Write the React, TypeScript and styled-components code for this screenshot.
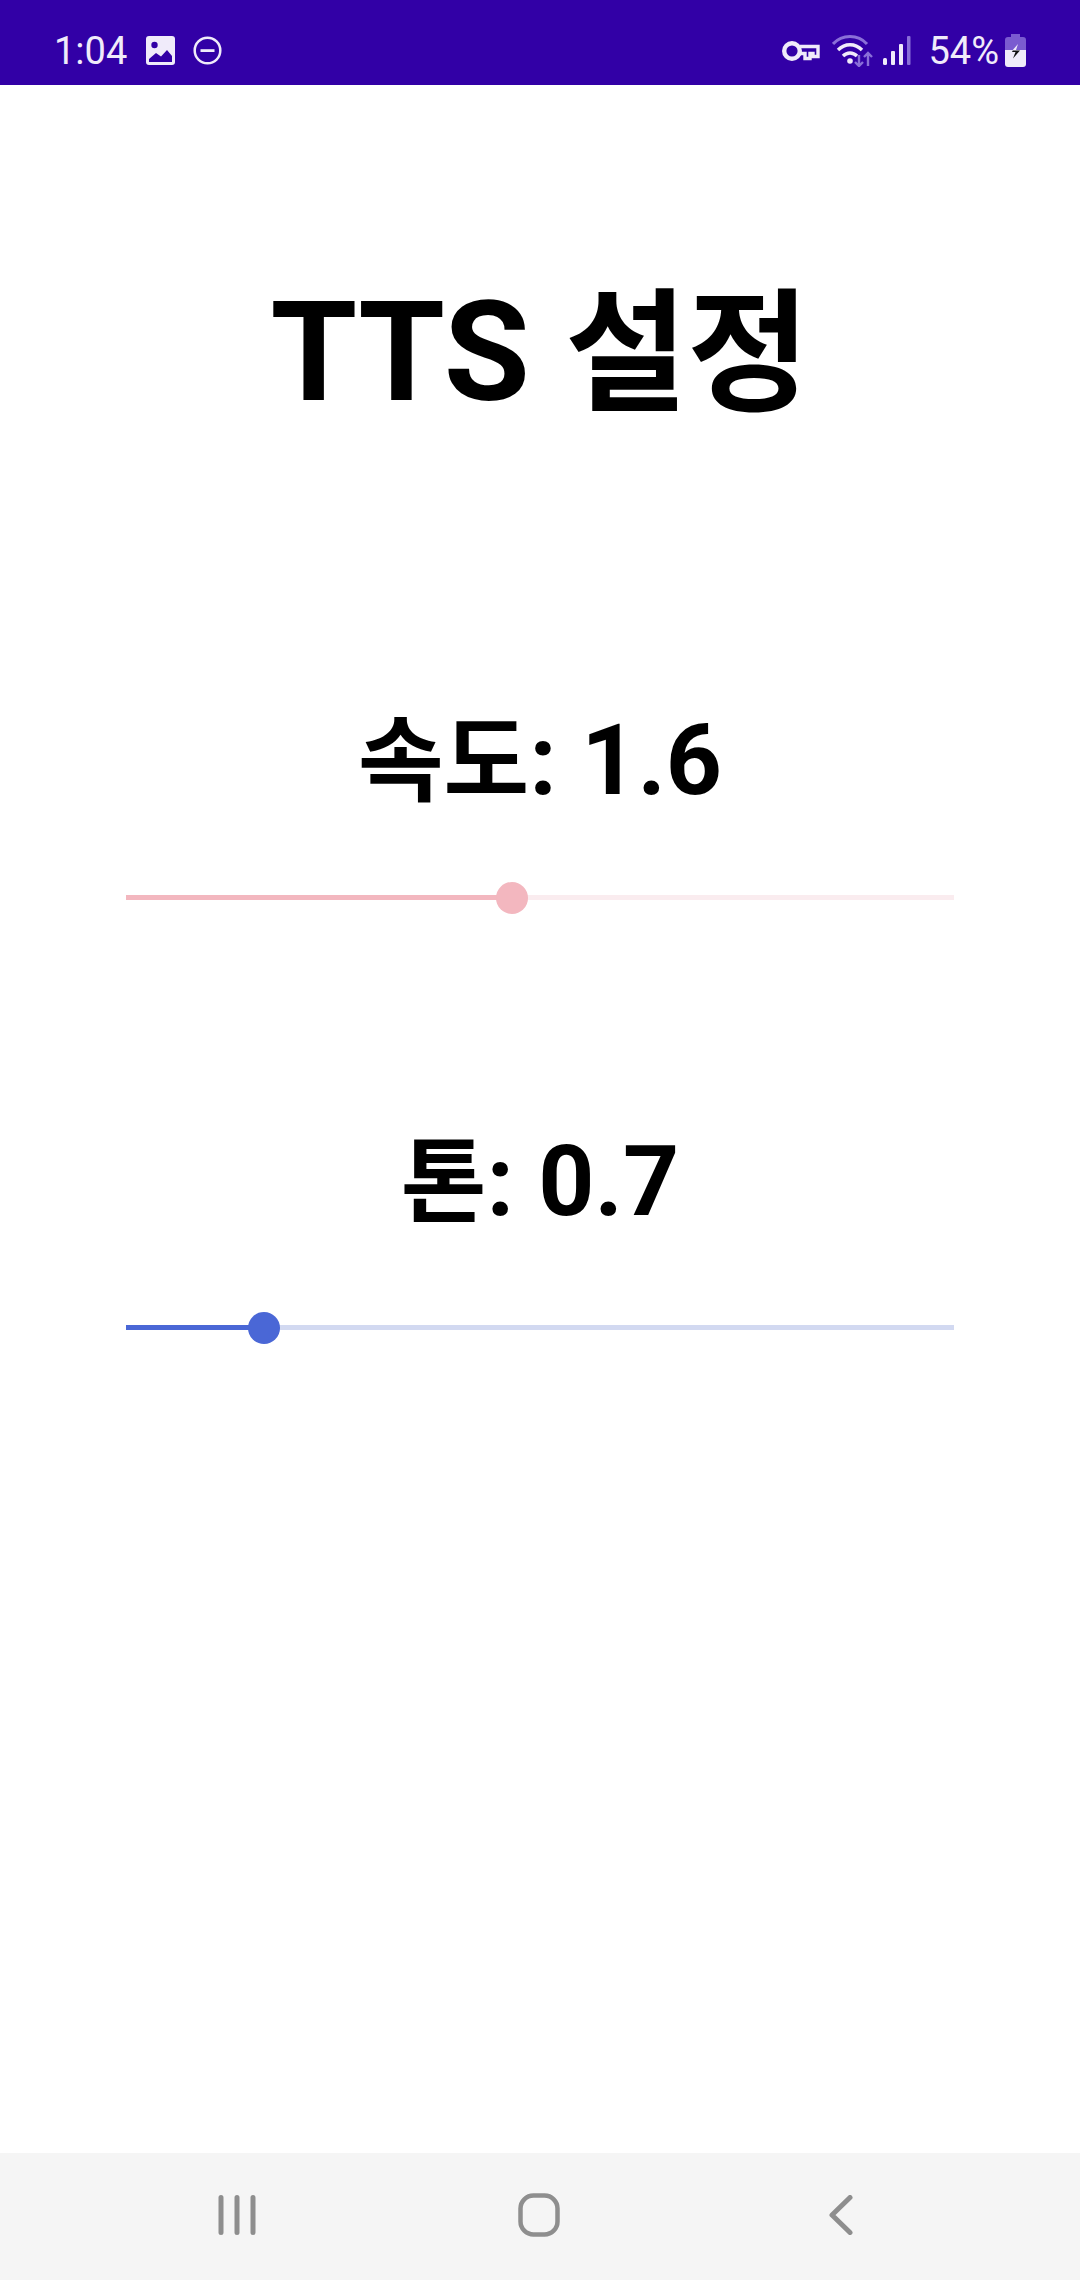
import React from 'react';
import styled, { createGlobalStyle } from 'styled-components';

const GlobalStyle = createGlobalStyle`
  html, body {
    margin: 0;
    padding: 0;
    background: #fff;
  }
`;

const Screen = styled.div`
  width: 1080px;
  height: 2280px;
  display: flex;
  flex-direction: column;
  font-family: Roboto, "Noto Sans CJK KR", sans-serif;
  overflow: hidden;
`;

const StatusBar = styled.div`
  height: 85px;
  flex: none;
  box-sizing: border-box;
  background: #3200a6;
  color: #f0ebfa;
  display: flex;
  align-items: center;
  justify-content: space-between;
  padding: 16px 54px 0 54px;
  font-size: 38px;
`;

const StatusGroup = styled.div`
  display: flex;
  align-items: center;
`;

const Clock = styled.span`
  margin-right: 19px;
`;

const Percent = styled.span`
  margin: 0 6px 0 17px;
`;

const Content = styled.main`
  flex: 1;
  display: flex;
  flex-direction: column;
  align-items: center;
  padding: 183px 126px 0;
`;

const Title = styled.h1`
  margin: 0 0 269px;
  font-size: 140px;
  line-height: 168px;
  font-weight: 700;
  color: #000;
`;

const Label = styled.h2<{ $gap: number }>`
  margin: 0 0 ${(p) => p.$gap}px;
  font-size: 98px;
  line-height: 112px;
  font-weight: 700;
  color: #000;
`;

// the device's Korean glyphs run a little smaller than the Latin ones
const Hangul = styled.span`
  font-size: 0.95em;
  line-height: 0;
`;

const SliderTrack = styled.div<{ $rest: string }>`
  position: relative;
  width: 100%;
  height: 5px;
  margin-bottom: 226px;
  background: ${(p) => p.$rest};
`;

const SliderFill = styled.div<{ $color: string }>`
  height: 100%;
  background: ${(p) => p.$color};
`;

const SliderThumb = styled.div<{ $color: string }>`
  position: absolute;
  top: 50%;
  width: 32px;
  height: 32px;
  border-radius: 50%;
  transform: translate(-50%, -50%);
  background: ${(p) => p.$color};
`;

const NavBar = styled.nav`
  height: 127px;
  flex: none;
  box-sizing: border-box;
  background: #f5f5f5;
  display: grid;
  grid-template-columns: repeat(3, 302px);
  justify-items: center;
  align-items: center;
  padding: 0 0 4px 86px;
`;

function Slider({ value, color, rest }: { value: number; color: string; rest: string }) {
  return (
    <SliderTrack $rest={rest}>
      <SliderFill $color={color} style={{ width: value }} />
      <SliderThumb $color={color} style={{ left: value }} />
    </SliderTrack>
  );
}

const ImageIcon = () => (
  <svg width="29" height="29" viewBox="0 0 29 29">
    <rect width="29" height="29" rx="3" fill="#f0ebfa" />
    <circle cx="8.5" cy="9" r="3.2" fill="#3200a6" />
    <path d="M3 26v-3l7-6 5 3.5L21 14l5 6v6z" fill="#3200a6" />
  </svg>
);

const DndIcon = () => (
  <svg width="29" height="29" viewBox="0 0 29 29" style={{ marginLeft: 18 }}>
    <circle cx="14.5" cy="14.5" r="12.8" fill="none" stroke="#f0ebfa" strokeWidth="2.5" />
    <rect x="7.5" y="13.2" width="14" height="2.8" fill="#f0ebfa" />
  </svg>
);

const KeyIcon = () => (
  <svg width="38" height="22" viewBox="0 0 38 22">
    <circle cx="10" cy="11" r="7.8" fill="none" stroke="#f0ebfa" strokeWidth="4.4" />
    <path d="M18 6.5h18v10h-5v-3h-3v5h-5v-5h-5" fill="none" stroke="#f0ebfa" strokeWidth="3.4" />
  </svg>
);

const WifiIcon = () => (
  <svg width="42" height="32" viewBox="0 0 42 32" style={{ marginLeft: 12 }}>
    <path d="M1 9C10-1 26-1 35 9" fill="none" stroke="#8a6fd8" strokeWidth="3" />
    <path d="M6 15c7-7 17-7 24 0" fill="none" stroke="#f0ebfa" strokeWidth="3.4" />
    <path d="M11 21c4-4 10-4 14 0" fill="none" stroke="#f0ebfa" strokeWidth="3.4" />
    <circle cx="18" cy="26" r="2.8" fill="#f0ebfa" />
    <path d="M27 20v11m-4-4 4 4 4-4" fill="none" stroke="#8a6fd8" strokeWidth="2.4" />
    <path d="M36 31V18m-4 4 4-4 4 4" fill="none" stroke="#8a6fd8" strokeWidth="2.4" />
  </svg>
);

const SignalIcon = () => (
  <svg width="28" height="30" viewBox="0 0 28 30" style={{ marginLeft: 9 }}>
    <rect x="0" y="22" width="4" height="7" rx="1.5" fill="#f0ebfa" />
    <rect x="8" y="15" width="4" height="14" rx="1" fill="#f0ebfa" />
    <rect x="16" y="8" width="4" height="21" rx="1" fill="#f0ebfa" />
    <rect x="24" y="0" width="3.5" height="29" rx="1" fill="#8a6fd8" />
  </svg>
);

const BatteryIcon = () => (
  <svg width="21" height="33" viewBox="0 0 21 33">
    <path d="M6 0h9v3h3a3 3 0 0 1 3 3v12H0V6a3 3 0 0 1 3-3h3z" fill="#7a5bd0" />
    <path d="M0 16h21v14a3 3 0 0 1-3 3H3a3 3 0 0 1-3-3z" fill="#f0ebfa" />
    <path d="M13 10l-7 8h5l-3 7 8-9h-5l2-6z" fill="#f0ebfa" />
    <path d="M15 16.5l-7 8 2.5-6.5H7l.8-1.5z" fill="#111" />
  </svg>
);

const RecentsIcon = () => (
  <svg width="38" height="40" viewBox="0 0 38 40">
    <path d="M3 2.5v35M19 2.5v35M35 2.5v35" stroke="#8e8e8e" strokeWidth="5" strokeLinecap="round" />
  </svg>
);

const HomeIcon = () => (
  <svg width="42" height="44" viewBox="0 0 42 44">
    <rect x="2.5" y="2.5" width="37" height="39" rx="13" fill="none" stroke="#8e8e8e" strokeWidth="4.5" />
  </svg>
);

const BackIcon = () => (
  <svg width="24" height="40" viewBox="0 0 24 40">
    <path d="M21 2.5 3 20l18 17.5" fill="none" stroke="#8e8e8e" strokeWidth="5" strokeLinecap="round" strokeLinejoin="round" />
  </svg>
);

export default function App() {
  return (
    <Screen>
      <GlobalStyle />
      <StatusBar>
        <StatusGroup>
          <Clock>1:04</Clock>
          <ImageIcon />
          <DndIcon />
        </StatusGroup>
        <StatusGroup>
          <KeyIcon />
          <WifiIcon />
          <SignalIcon />
          <Percent>54%</Percent>
          <BatteryIcon />
        </StatusGroup>
      </StatusBar>
      <Content>
        <Title>TTS <Hangul>설정</Hangul></Title>
        <Label $gap={78}><Hangul>속도</Hangul>: 1.6</Label>
        <Slider value={386} color="#f3b7bf" rest="#faecef" />
        <Label $gap={87}><Hangul>톤</Hangul>: 0.7</Label>
        <Slider value={138} color="#4a67d6" rest="#d2d9f1" />
      </Content>
      <NavBar>
        <RecentsIcon />
        <HomeIcon />
        <BackIcon />
      </NavBar>
    </Screen>
  );
}
